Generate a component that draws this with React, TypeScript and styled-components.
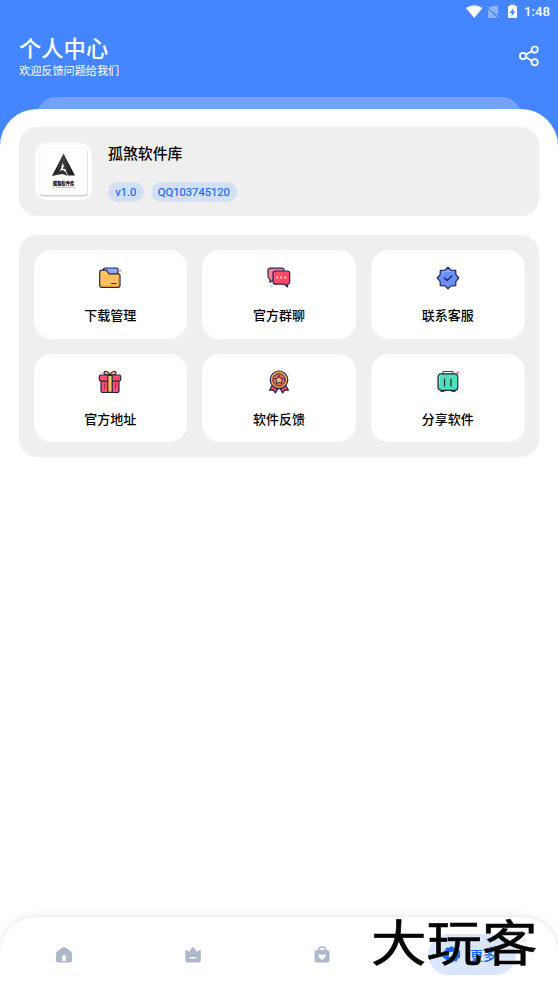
import React from "react";
import styled, { createGlobalStyle } from "styled-components";

const GlobalStyle = createGlobalStyle`
  * { box-sizing: border-box; }
  body { margin: 0; background: #fff; }
`;

const Screen = styled.div`
  position: relative;
  display: flex;
  flex-direction: column;
  width: 558px;
  height: 992px;
  overflow: hidden;
  background: #4486ff;
  font-family: Roboto, "Noto Sans CJK SC", sans-serif;
  color: #000;
`;

const StatusBar = styled.div`
  display: flex;
  align-items: center;
  justify-content: flex-end;
  height: 24px;
  padding-right: 7px;
  color: #fff;
`;

const Clock = styled.span`
  margin-left: 6px;
  width: 27px;
  font-size: 13.2px;
  font-weight: 500;
  line-height: 26px;
  white-space: nowrap;
`;

const Header = styled.header`
  display: flex;
  align-items: center;
  justify-content: space-between;
  height: 73px;
  padding: 0 17.5px 9px 19px;
  color: #fff;
`;

const Title = styled.h1`
  margin: 3px 0 0;
  font-size: 22.3px;
  font-weight: 500;
  line-height: 26px;
`;

const Subtitle = styled.p`
  margin: 2px 0 0;
  font-size: 11.15px;
  line-height: 15px;
`;

const BackSheet = styled.div`
  flex: none;
  height: 40px;
  margin: 0 37px -28.5px;
  border-radius: 19px 19px 0 0;
  background: #73a3ff;
`;

const Sheet = styled.main`
  position: relative;
  flex: 1;
  display: flex;
  flex-direction: column;
  gap: 19px;
  margin-bottom: -40px;
  padding: 18.5px 19px 0;
  border-radius: 37px 37px 0 0;
  background: #fff;
`;

const Profile = styled.section`
  display: flex;
  height: 89px;
  padding: 16px;
  border-radius: 18px;
  background: #efefef;
`;

const Avatar = styled.div`
  width: 57px;
  height: 57px;
  border-radius: 12px;
  background: #fff;
`;

const ProfileInfo = styled.div`
  display: flex;
  flex-direction: column;
  justify-content: space-between;
  margin-left: 16px;
  height: 59px;
`;

const Name = styled.div`
  padding-top: 1px;
  font-size: 14.9px;
  font-weight: 500;
  line-height: 20px;
`;

const Chips = styled.div`
  display: flex;
  gap: 7px;
`;

const Chip = styled.span`
  height: 20px;
  padding: 0 7.3px;
  border-radius: 10px;
  background: #d3dff5;
  color: #1768ff;
  font-size: 11.2px;
  font-weight: 400;
  line-height: 22px;
  -webkit-text-stroke: 0.2px #1768ff;
`;

const ActionGrid = styled.section`
  display: grid;
  grid-template-columns: repeat(3, 1fr);
  grid-auto-rows: 88.5px;
  gap: 15px;
  padding: 15px 14.5px;
  border-radius: 18px;
  background: #efefef;
`;

const Action = styled.div`
  display: flex;
  flex-direction: column;
  align-items: center;
  padding-top: 16px;
  border-radius: 18px;
  background: #fff;
`;

const ActionLabel = styled.span`
  margin-top: 17px;
  font-size: 13px;
  font-weight: 500;
  line-height: 18px;
`;

const TabBar = styled.nav`
  position: relative;
  flex: none;
  display: flex;
  align-items: center;
  height: 75px;
  padding-left: 54px;
  border-radius: 36px 36px 0 0;
  background: #fff;
  box-shadow: 0 0 7px rgba(0, 0, 0, 0.14);
`;

const Tab = styled.div`
  display: flex;
  width: 129px;
  height: 20px;
`;

const ActiveTab = styled.div`
  display: flex;
  align-items: center;
  gap: 9px;
  width: 88px;
  height: 41px;
  margin-left: -13px;
  padding-left: 14px;
  border-radius: 21px;
  background: #dae6fd;
  color: #0861ff;
  font-size: 13px;
  font-weight: 500;
`;

/* Brand mark laid over the tab bar. */
const BrandMark = styled.div`
  position: absolute;
  left: 371px;
  top: 909px;
  font-family: "Noto Sans CJK SC", sans-serif;
  font-size: 55.5px;
  font-weight: 400;
  line-height: 62px;
  white-space: nowrap;
  transform: scaleY(0.88);
  transform-origin: center;
  color: #050505;
  -webkit-text-stroke: 0.7px #050505;
  stroke-linejoin: round;
  text-shadow: 0 0 2px #fff6d8;
`;

const outline = { stroke: "#25234b", strokeWidth: 1.2, strokeLinejoin: "round" as const, strokeLinecap: "round" as const };

const FolderIcon = () => (
  <svg width="24" height="24" viewBox="0 0 24 24" fill="none" {...outline}>
    <path d="M5.500 6V3.500Q5.500 2 7 2h11.500q1.500 0 1.500 1.500V9" fill="#8eaafa" />
    <path d="M1.700 6.200q0-2 2-2h3.800q1.200 0 1.800 1l1.500 2.600h9.400q1.800 0 1.800 2v9.500q0 2-2 2H3.700q-2 0-2-2Z" fill="#ffc15d" />
    <path d="M20.700 10v8.200q0 1.700-1.700 1.700H4" stroke="#f0983f" strokeWidth=".9" />
    <path d="M13.500 17.500h4.500" />
    <circle cx="22" cy="4.500" r="1.100" stroke="#ff8298" strokeWidth=".7" />
  </svg>
);

const ChatIcon = () => (
  <svg width="24" height="24" viewBox="0 0 24 24" fill="none" {...outline}>
    <path d="M3 2.2h12q2 0 2 2v8q0 2-2 2H6l-3 2-.2-3Q1 12.5 1 10V4.2q0-2 2-2Z" fill="#f58391" />
    <path d="M8.5 5h11.700q2.500 0 2.500 2.500v8q0 2.500-2.200 2.500l.1 3-3.500-2.800H8.5Q6 18.200 6 15.500v-8Q6 5 8.500 5Z" fill="#ff4d66" />
    <path d="M10 11.500h.1m4 0h.1m4 0h.1" stroke="#fff" strokeWidth="1.900" />
    <circle cx="4" cy="20" r="1.1" stroke="#b8c7ff" strokeWidth=".7" />
  </svg>
);

const BadgeIcon = () => (
  <svg width="24" height="24" viewBox="0 0 24 24" fill="none" {...outline}>
    <path d="m12 1.200 3.200 2.900 4.500.2.200 4.400 2.800 3.300-2.800 3.300-.2 4.400-4.500.2-3.200 2.900-3.200-2.900-4.500-.2-.2-4.400L1.300 12l2.800-3.300.2-4.400 4.500-.2Z" fill="#6990ff" />
    <path d="M6 7.500Q9 4 14 5.500" stroke="#91aefe" />
    <path d="m8.500 12.100 2.500 2.500 4.700-4.500" strokeWidth="1.400" />
  </svg>
);

const GiftIcon = () => (
  <svg width="24" height="24" viewBox="0 0 24 24" fill="none" {...outline}>
    <path d="M3 11h18v9.500q0 2-2 2H5q-2 0-2-2Z" fill="#ff5068" />
    <path d="M11 5Q6 5 6 3.300 6 1 8.500 1.500 11 2 12 5q1-3 3.500-3.500Q18 1 18 3.300 18 5 13 5" fill="#ffc260" />
    <path d="M2.800 5h18.400q1.500 0 1.500 1.500V9q0 2-2 2H3.300q-2 0-2-2V6.500Q1.300 5 2.800 5Z" fill="#ff5068" />
    <path d="M9.800 5.300h4.400v17H9.800Z" fill="#ffc260" />
    <path d="M6.500 13v6m11-6v6" strokeWidth=".5" />
    <path d="M3 2v1" stroke="#ff8c9c" />
  </svg>
);

const MedalIcon = () => (
  <svg width="24" height="24" viewBox="0 0 24 24" fill="none" {...outline}>
    <path d="m6 14-3.500 6.200 3.800-.3 2 3 3.700-6 3.700 6 2-3 3.800.3L18 14Z" fill="#ff5066" />
    <circle cx="12" cy="9.800" r="8.800" fill="#f3ad4d" />
    <circle cx="12" cy="9.800" r="6.200" fill="#ee655c" strokeWidth=".9" />
    <path d="m12 5.600 1.300 2.700 3 .4-2.200 2.100.6 3-2.700-1.500-2.700 1.500.6-3-2.200-2.100 3-.4Z" fill="#ffc15c" strokeWidth=".9" />
    <path d="M2 3h.1M22 4h.1" stroke="#ffa17c" />
  </svg>
);

const CaseIcon = () => (
  <svg width="24" height="24" viewBox="0 0 24 24" fill="none" {...outline}>
    <path d="M7 4V2.300q0-.8.800-.800h8.400q.8 0 .8.800V4M5 20v1.500h3V20m8 0v1.500h3V20" stroke="#3d4663" />
    <rect x="2" y="3.800" width="19.800" height="16.500" rx="3" fill="#4ddfb5" />
    <path d="M3.500 14V7q0-2 2-2" stroke="#91f4d8" strokeWidth=".7" />
    <path d="M8.500 9v7M15 9v7" />
    <circle cx="21.700" cy="2.700" r="1.200" fill="#ff5a6d" stroke="none" />
    <path d="M2 22h.1M22 22h.1" stroke="#ffc55c" />
  </svg>
);

const actions = [
  { label: "下载管理", Icon: FolderIcon },
  { label: "官方群聊", Icon: ChatIcon },
  { label: "联系客服", Icon: BadgeIcon },
  { label: "官方地址", Icon: GiftIcon },
  { label: "软件反馈", Icon: MedalIcon },
  { label: "分享软件", Icon: CaseIcon },
];

const StatusIcons = () => (
  <svg width="53" height="16" viewBox="0 0 53 16" fill="#fff">
    <path d="M1 4Q9-1.500 17.500 4L9.200 14Z" />
    <path d="M27 2h6v9L24 4Zm-4 3 9 9h-9Z" opacity=".4" />
    <path d="m22 2 12 12" stroke="#b5ceff" strokeWidth="1" opacity=".7" />
    <path d="M43 2h2V.7h5V2h2v12h-9Z" />
    <path d="m48.500 4-4 5H47l-.7 3.500 4.200-5.200H48Z" fill="#4486ff" />
  </svg>
);

const ShareIcon = () => (
  <svg width="24" height="24" viewBox="0 0 24 24" fill="none" stroke="#fff" strokeWidth="1.700">
    <path d="m9 10.400 6-3.300m-6 6.200 6 3.600" />
    <circle cx="6" cy="12" r="3.100" />
    <circle cx="17.700" cy="5.600" r="3.100" />
    <circle cx="17.700" cy="18.300" r="3.100" />
  </svg>
);

const Logo = () => (
  <svg width="57" height="57" viewBox="0 0 57 57">
    <defs>
      <linearGradient id="ink" x1="0" x2="1" y1="0" y2="0">
        <stop offset="0" stopColor="#151515" /><stop offset=".5" stopColor="#414141" /><stop offset="1" stopColor="#111" />
      </linearGradient>
    </defs>
    <rect x="5" y="7" width="47.500" height="46.500" rx="3" fill="#c7c7c7" />
    <rect x="5" y="5" width="47" height="47" rx="3" fill="#fff" stroke="#efefef" strokeWidth=".6" />
    <path d="m28.500 10.500 11.500 22h-7L27.500 20 26 26l-3 4-6 3Z" fill="url(#ink)" />
    <path d="m16.500 33 8-5 3.500-1 3 2.500 1.500 3.500-5-2Z" fill="#333" />
    <circle cx="29" cy="25" r="1" fill="#222" />
    <text x="28.500" y="41.500" textAnchor="middle" fontFamily="Noto Sans CJK SC, sans-serif" fontSize="4.300" fontWeight="900">孤煞软件库</text>
    <text x="28.500" y="45" textAnchor="middle" fontFamily="Liberation Sans, sans-serif" fontSize="2.400" fill="#666">Gu Sha Ruan Jian Ku</text>
  </svg>
);

const HomeIcon = () => (
  <svg width="20" height="20" viewBox="0 0 20 20">
    <path d="M10 2q1 0 7 4.500 1 .8 1 2v7q0 2-2 2H4q-2 0-2-2v-7q0-1.200 1-2Q9 2 10 2Z" fill="#adb8ca" />
    <path d="M8 16v-4q0-2 2-2t2 2v4Z" fill="#fff" />
  </svg>
);

const CrownIcon = () => (
  <svg width="20" height="20" viewBox="0 0 20 20">
    <path d="M2.300 6Q2 4.500 3.300 5L6 6.700 9.300 2.500q.7-1 1.400 0L14 6.700 16.700 5q1.300-.5 1.100 1v9.500q0 2-2 2H4.300q-2 0-2-2Z" fill="#adb8ca" />
    <path d="M7.300 12.800h5.600" stroke="#fff" strokeWidth="1.500" strokeLinecap="round" />
  </svg>
);

const BagIcon = () => (
  <svg width="20" height="20" viewBox="0 0 20 20">
    <path d="M6.500 6V4.800q0-2.800 3.500-2.800t3.500 2.800V6" fill="none" stroke="#adb8ca" strokeWidth="1.700" />
    <rect x="2.500" y="5" width="15" height="12.500" rx="2.500" fill="#adb8ca" />
    <path d="M10 15Q5.500 11.500 6.600 9.800 8 8.500 10 10.500q2-2 3.400-.7 1.100 1.700-3.400 5.200Z" fill="#fff" />
  </svg>
);

const GearIcon = () => (
  <svg width="19" height="19" viewBox="0 0 20 20">
    <path d="m10 1 2.400 1.800 3-.3 1.100 2.800 2.700 1.300-.5 3.400.5 3-2.700 1.500-1.200 2.900-3-.4L10 19l-2.400-1.900-3 .3-1.100-2.800-2.700-1.400.5-3.200-.5-3.200 2.700-1.500 1.200-2.800 3 .3Z" fill="#0861ff" />
    <circle cx="10" cy="10" r="3" fill="#dae6fd" />
  </svg>
);

export default function App() {
  return (
    <Screen>
      <GlobalStyle />
      <StatusBar>
        <StatusIcons />
        <Clock>1:48</Clock>
      </StatusBar>
      <Header>
        <div>
          <Title>个人中心</Title>
          <Subtitle>欢迎反馈问题给我们</Subtitle>
        </div>
        <ShareIcon />
      </Header>
      <BackSheet />
      <Sheet>
        <Profile>
          <Avatar><Logo /></Avatar>
          <ProfileInfo>
            <Name>孤煞软件库</Name>
            <Chips><Chip>v1.0</Chip><Chip>QQ103745120</Chip></Chips>
          </ProfileInfo>
        </Profile>
        <ActionGrid>
          {actions.map(({ label, Icon }) => (
            <Action key={label}><Icon /><ActionLabel>{label}</ActionLabel></Action>
          ))}
        </ActionGrid>
      </Sheet>
      <TabBar>
        <Tab><HomeIcon /></Tab>
        <Tab><CrownIcon /></Tab>
        <Tab><BagIcon /></Tab>
        <ActiveTab><GearIcon />更多</ActiveTab>
      </TabBar>
      <BrandMark>大玩客</BrandMark>
    </Screen>
  );
}
